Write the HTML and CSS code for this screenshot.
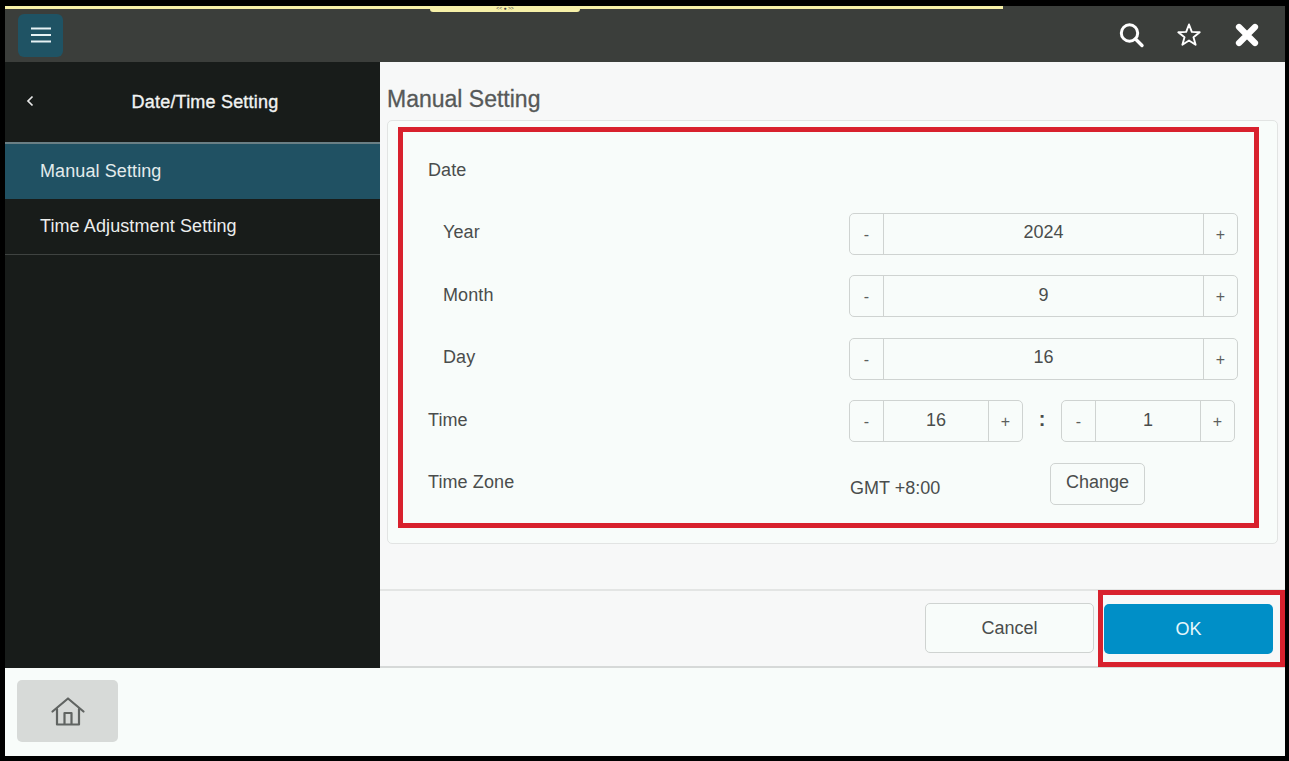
FILE: index.html
```html
<!DOCTYPE html>
<html lang="en">
<head>
<meta charset="utf-8">
<title>Date/Time Setting</title>
<link rel="stylesheet" href="styles.css">
</head>
<body>
<div class="app">
  <div class="notch-line"><div class="notch">&lt;&lt; ● &gt;&gt;</div></div>
  <header class="topbar">
    <button class="menu-btn" aria-label="Menu">
      <svg width="22" height="18" viewBox="0 0 22 18"><path d="M1 2.5h20M1 9h20M1 15.500h20" stroke="#e6f2f4" stroke-width="2.200" fill="none"/></svg>
    </button>
    <div class="top-icons">
      <svg class="ti" width="28" height="28" viewBox="0 0 28 28"><circle cx="12.500" cy="12" r="8.200" stroke="#fff" stroke-width="3" fill="none"/><path d="M18.500 18l6.500 6.500" stroke="#fff" stroke-width="3.400" stroke-linecap="round"/></svg>
      <svg class="ti" width="28" height="28" viewBox="0 0 28 28"><path d="M14 3.500l2.800 7.400 7.900.4-6.200 4.900 2.100 7.600L14 19.500l-6.600 4.300 2.100-7.600-6.200-4.900 7.900-.4z" stroke="#fff" stroke-width="1.900" fill="none" stroke-linejoin="round"/></svg>
      <svg class="ti" width="28" height="28" viewBox="0 0 28 28"><path d="M6 6l16 16M22 6L6 22" stroke="#fff" stroke-width="6.200" stroke-linecap="round"/></svg>
    </div>
  </header>
  <div class="middle">
    <aside class="sidebar">
      <div class="side-head">
        <svg class="back" width="10" height="14" viewBox="0 0 10 14"><path d="M7.500 2.500L3 7l4.500 4.500" stroke="#e8e8e8" stroke-width="1.700" fill="none"/></svg>
        <h2 class="side-title">Date/Time Setting</h2>
      </div>
      <ul class="side-menu">
        <li class="side-item active">Manual Setting</li>
        <li class="side-item">Time Adjustment Setting</li>
      </ul>
    </aside>
    <main class="main">
      <h1 class="page-title">Manual Setting</h1>
      <section class="card">
        <div class="form">
          <div class="label">Date</div><div></div>
          <div class="label sub">Year</div>
          <div class="stepper wide"><span class="step">-</span><span class="val">2024</span><span class="step plus">+</span></div>
          <div class="label sub">Month</div>
          <div class="stepper wide"><span class="step">-</span><span class="val">9</span><span class="step plus">+</span></div>
          <div class="label sub">Day</div>
          <div class="stepper wide"><span class="step">-</span><span class="val">16</span><span class="step plus">+</span></div>
          <div class="label">Time</div>
          <div class="time-row">
            <div class="stepper narrow"><span class="step">-</span><span class="val">16</span><span class="step plus">+</span></div>
            <span class="colon">:</span>
            <div class="stepper narrow"><span class="step">-</span><span class="val">1</span><span class="step plus">+</span></div>
          </div>
          <div class="label">Time Zone</div>
          <div class="zone-row"><span class="gmt">GMT +8:00</span><button class="btn change">Change</button></div>
        </div>
      </section>
      <footer class="actions">
        <button class="btn cancel">Cancel</button>
        <div class="ok-frame"><button class="ok">OK</button></div>
      </footer>
    </main>
  </div>
  <div class="homebar">
    <button class="home-btn" aria-label="Home">
      <svg width="36" height="32" viewBox="0 0 36 32"><path d="M2.500 15.500L18 2.500l15.500 13M7 13v15.500h22V13M14.500 28.500V17h7v11.500" stroke="#606462" stroke-width="2.200" fill="none" stroke-linejoin="round" stroke-linecap="round"/></svg>
    </button>
  </div>
</div>
</body>
</html>
```
FILE: styles.css
```css
* { box-sizing: border-box; }
html, body { margin: 0; height: 100%; background: #000; overflow: hidden; }
body { font-family: "Liberation Sans", Arial, sans-serif; color: #4a4d4c; }
button { font: inherit; padding: 0; }
.app { width: 1280px; height: 750px; margin: 6px 0 0 5px; display: flex; flex-direction: column; position: relative; }
.notch-line { position: absolute; left: 0; top: 0; width: 998px; height: 3px; background: #f6f0a8; display: flex; justify-content: center; z-index: 2; padding-left: 2px; }
.notch { position: absolute; left: 425px; top: 0; width: 150px; height: 6px; background: #f6f0a8; border-radius: 0 0 3px 3px; font-size: 5px; line-height: 5px; text-align: center; color: #444; }
.topbar { height: 56px; flex: none; background: #3b3e3b; display: flex; align-items: center; justify-content: space-between; padding: 2px 24px 0 13px; }
.menu-btn { width: 45px; height: 43px; border: 0; border-radius: 6px; background: #1f5364; display: flex; align-items: center; justify-content: center; }
.top-icons { display: flex; gap: 30px; align-items: center; }
.ti { display: block; }
.middle { flex: 1; display: flex; min-height: 0; }
.sidebar { width: 375px; flex: none; background: #181c1a; color: #f1f3f2; }
.side-head { height: 80px; display: flex; align-items: center; justify-content: center; position: relative; }
.back { position: absolute; left: 20px; top: 32px; }
.side-title { margin: 0 0 0 25px; font-size: 18px; font-weight: 400; -webkit-text-stroke: 0.35px #f1f3f2; letter-spacing: 0.2px; }
.side-menu { list-style: none; margin: 0; padding: 0; }
.side-item { height: 56px; padding-left: 35px; display: flex; align-items: center; font-size: 18px; border-bottom: 1px solid #3f4341; color: #eceeed; letter-spacing: 0.1px; }
.side-item.active { height: 57px; background: #205163; border-top: 2px solid #6a7f85; border-bottom: 0; color: #e3ebec; }
.main { flex: 1; background: #f7f8f8; display: flex; flex-direction: column; min-width: 0; }
.page-title { height: 63px; margin: 0; padding: 20px 0 0 7px; font-size: 23px; font-weight: 400; line-height: 34px; color: #565958; -webkit-text-stroke: 0.3px #565958; }
.card { height: 424px; margin: 0 7px; flex: none; padding: 6px 18px 15px 10px; background: #f8fcfa; border: 1px solid #e2e4e3; border-radius: 5px; }
.form { height: 401px; border: 5px solid #d8212d; padding: 8px 0 0 25px; display: grid; grid-template-columns: 421px 1fr; grid-auto-rows: 62.5px; align-items: center; }
.label { font-size: 18px; padding-bottom: 2px; letter-spacing: 0.1px; }
.label.sub { padding-left: 15px; }
.stepper { height: 42px; display: flex; border: 1px solid #cfd3d1; border-radius: 5px; background: #f8fcfa; }
.stepper.wide { width: 389px; }
.stepper.narrow { width: 174px; }
.step { width: 33px; flex: none; display: flex; align-items: center; justify-content: center; font-size: 16px; color: #5c5f5e; padding-top: 2px; }
.step.plus { width: 34px; border-left: 1px solid #cfd3d1; }
.val { flex: 1; display: flex; align-items: center; justify-content: center; border-left: 1px solid #cfd3d1; font-size: 18px; padding-bottom: 2px; }
.time-row { display: flex; align-items: center; }
.colon { width: 38px; text-align: center; font-size: 20px; font-weight: 700; padding-bottom: 3px; }
.zone-row { display: flex; align-items: center; position: relative; }
.gmt { width: 201px; font-size: 18px; padding: 10px 0 0 1px; }
.btn { background: #f8fcfa; color: #4a4d4c; border: 1px solid #cfd3d1; border-radius: 5px; font-size: 18px; }
.change { width: 95px; height: 42px; padding-bottom: 2px; }
.actions { margin-top: 45px; flex: 1; border-top: 2px solid #e3e5e4; border-bottom: 2px solid #d6d9d8; display: flex; align-items: center; justify-content: flex-end; padding-bottom: 1px; }
.cancel { width: 169px; height: 50px; margin-right: 4px; }
.ok-frame { width: 187px; height: 77px; margin: -1px 0 -2px; border: 5px solid #d8212d; padding: 9px 7px 9px 1px; flex: none; }
.ok { width: 100%; height: 50px; border: 0; border-radius: 5px; background: #008fc7; color: #e6f7fb; font-size: 18px; }
.homebar { height: 88px; flex: none; background: #f8fcfa; padding: 12px; }
.home-btn { width: 101px; height: 62px; border: 0; border-radius: 5px; background: #d7dad8; display: flex; align-items: center; justify-content: center; padding-top: 2px; }
```
